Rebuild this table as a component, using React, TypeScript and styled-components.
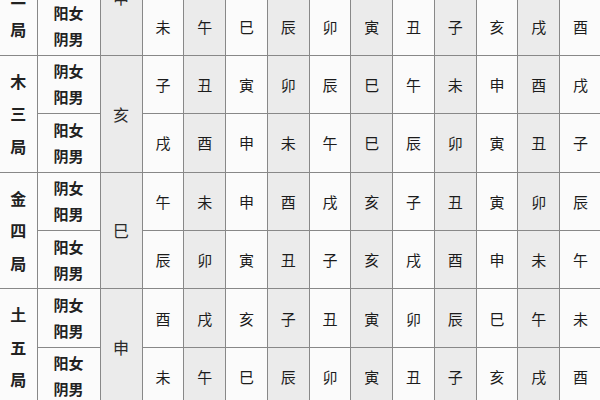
import React from 'react'
import styled, { createGlobalStyle } from 'styled-components'

const GlobalStyle = createGlobalStyle`
  html, body {
    margin: 0;
    padding: 0;
    background: #fbfbfb;
  }
  body {
    font-family: 'Noto Sans CJK SC', 'Noto Sans', sans-serif;
  }
`

const Page = styled.div`
  width: 600px;
  height: 400px;
  overflow: hidden;
`

const Table = styled.table`
  width: 602px;
  margin-top: -62px;
  border-collapse: collapse;
  table-layout: fixed;
`

const Cell = styled.td<{ $shaded?: boolean }>`
  height: 57.4px;
  padding: 0;
  border: 1.5px solid #888;
  text-align: center;
  vertical-align: middle;
  background: ${(p) => (p.$shaded ? '#ebebeb' : 'transparent')};
  font-size: 15px;
  color: #1c1c1c;

  &:first-child {
    border-left: none;
  }
`

const JuCell = styled(Cell)`
  font-size: 16px;
  font-weight: 700;
  color: #222;
`

const JuChar = styled.span`
  display: block;
  line-height: 32.5px;
`

const GenderCell = styled(Cell)`
  font-size: 15px;
  font-weight: 700;
  color: #222;
  line-height: 26px;
`

const BranchCell = styled(Cell)`
  font-size: 16px;
  color: #2a2a2a;
`

interface Group {
  ju: string
  branch: string
  rows: string[]
}

const groups: Group[] = [
  { ju: '水二局', branch: '申', rows: ['酉戌亥子丑寅卯辰巳午未', '未午巳辰卯寅丑子亥戌酉'] },
  { ju: '木三局', branch: '亥', rows: ['子丑寅卯辰巳午未申酉戌', '戌酉申未午巳辰卯寅丑子'] },
  { ju: '金四局', branch: '巳', rows: ['午未申酉戌亥子丑寅卯辰', '辰卯寅丑子亥戌酉申未午'] },
  { ju: '土五局', branch: '申', rows: ['酉戌亥子丑寅卯辰巳午未', '未午巳辰卯寅丑子亥戌酉'] },
]

const genders = [
  ['阴女', '阳男'],
  ['阳女', '阴男'],
]

const App: React.FC = () => {
  return (
    <Page>
      <GlobalStyle />
      <Table>
        <colgroup>
          <col style={{ width: 37 }} />
          <col style={{ width: 63 }} />
          <col style={{ width: 42 }} />
          {new Array(11).fill(1).map((_, i) => (
            <col key={i} />
          ))}
        </colgroup>
        <tbody>
          {groups.map((group) =>
            group.rows.map((row, r) => (
              <tr key={group.ju + r}>
                {r === 0 && (
                  <JuCell rowSpan={2}>
                    {group.ju.split('').map((ch, i) => (
                      <JuChar key={i}>{ch}</JuChar>
                    ))}
                  </JuCell>
                )}
                <GenderCell>
                  {genders[r][0]}
                  <br />
                  {genders[r][1]}
                </GenderCell>
                {r === 0 && (
                  <BranchCell rowSpan={2} $shaded>
                    {group.branch}
                  </BranchCell>
                )}
                {row.split('').map((ch, i) => (
                  <Cell key={i} $shaded={i % 2 === 1}>
                    {ch}
                  </Cell>
                ))}
              </tr>
            ))
          )}
        </tbody>
      </Table>
    </Page>
  )
}

export default App
